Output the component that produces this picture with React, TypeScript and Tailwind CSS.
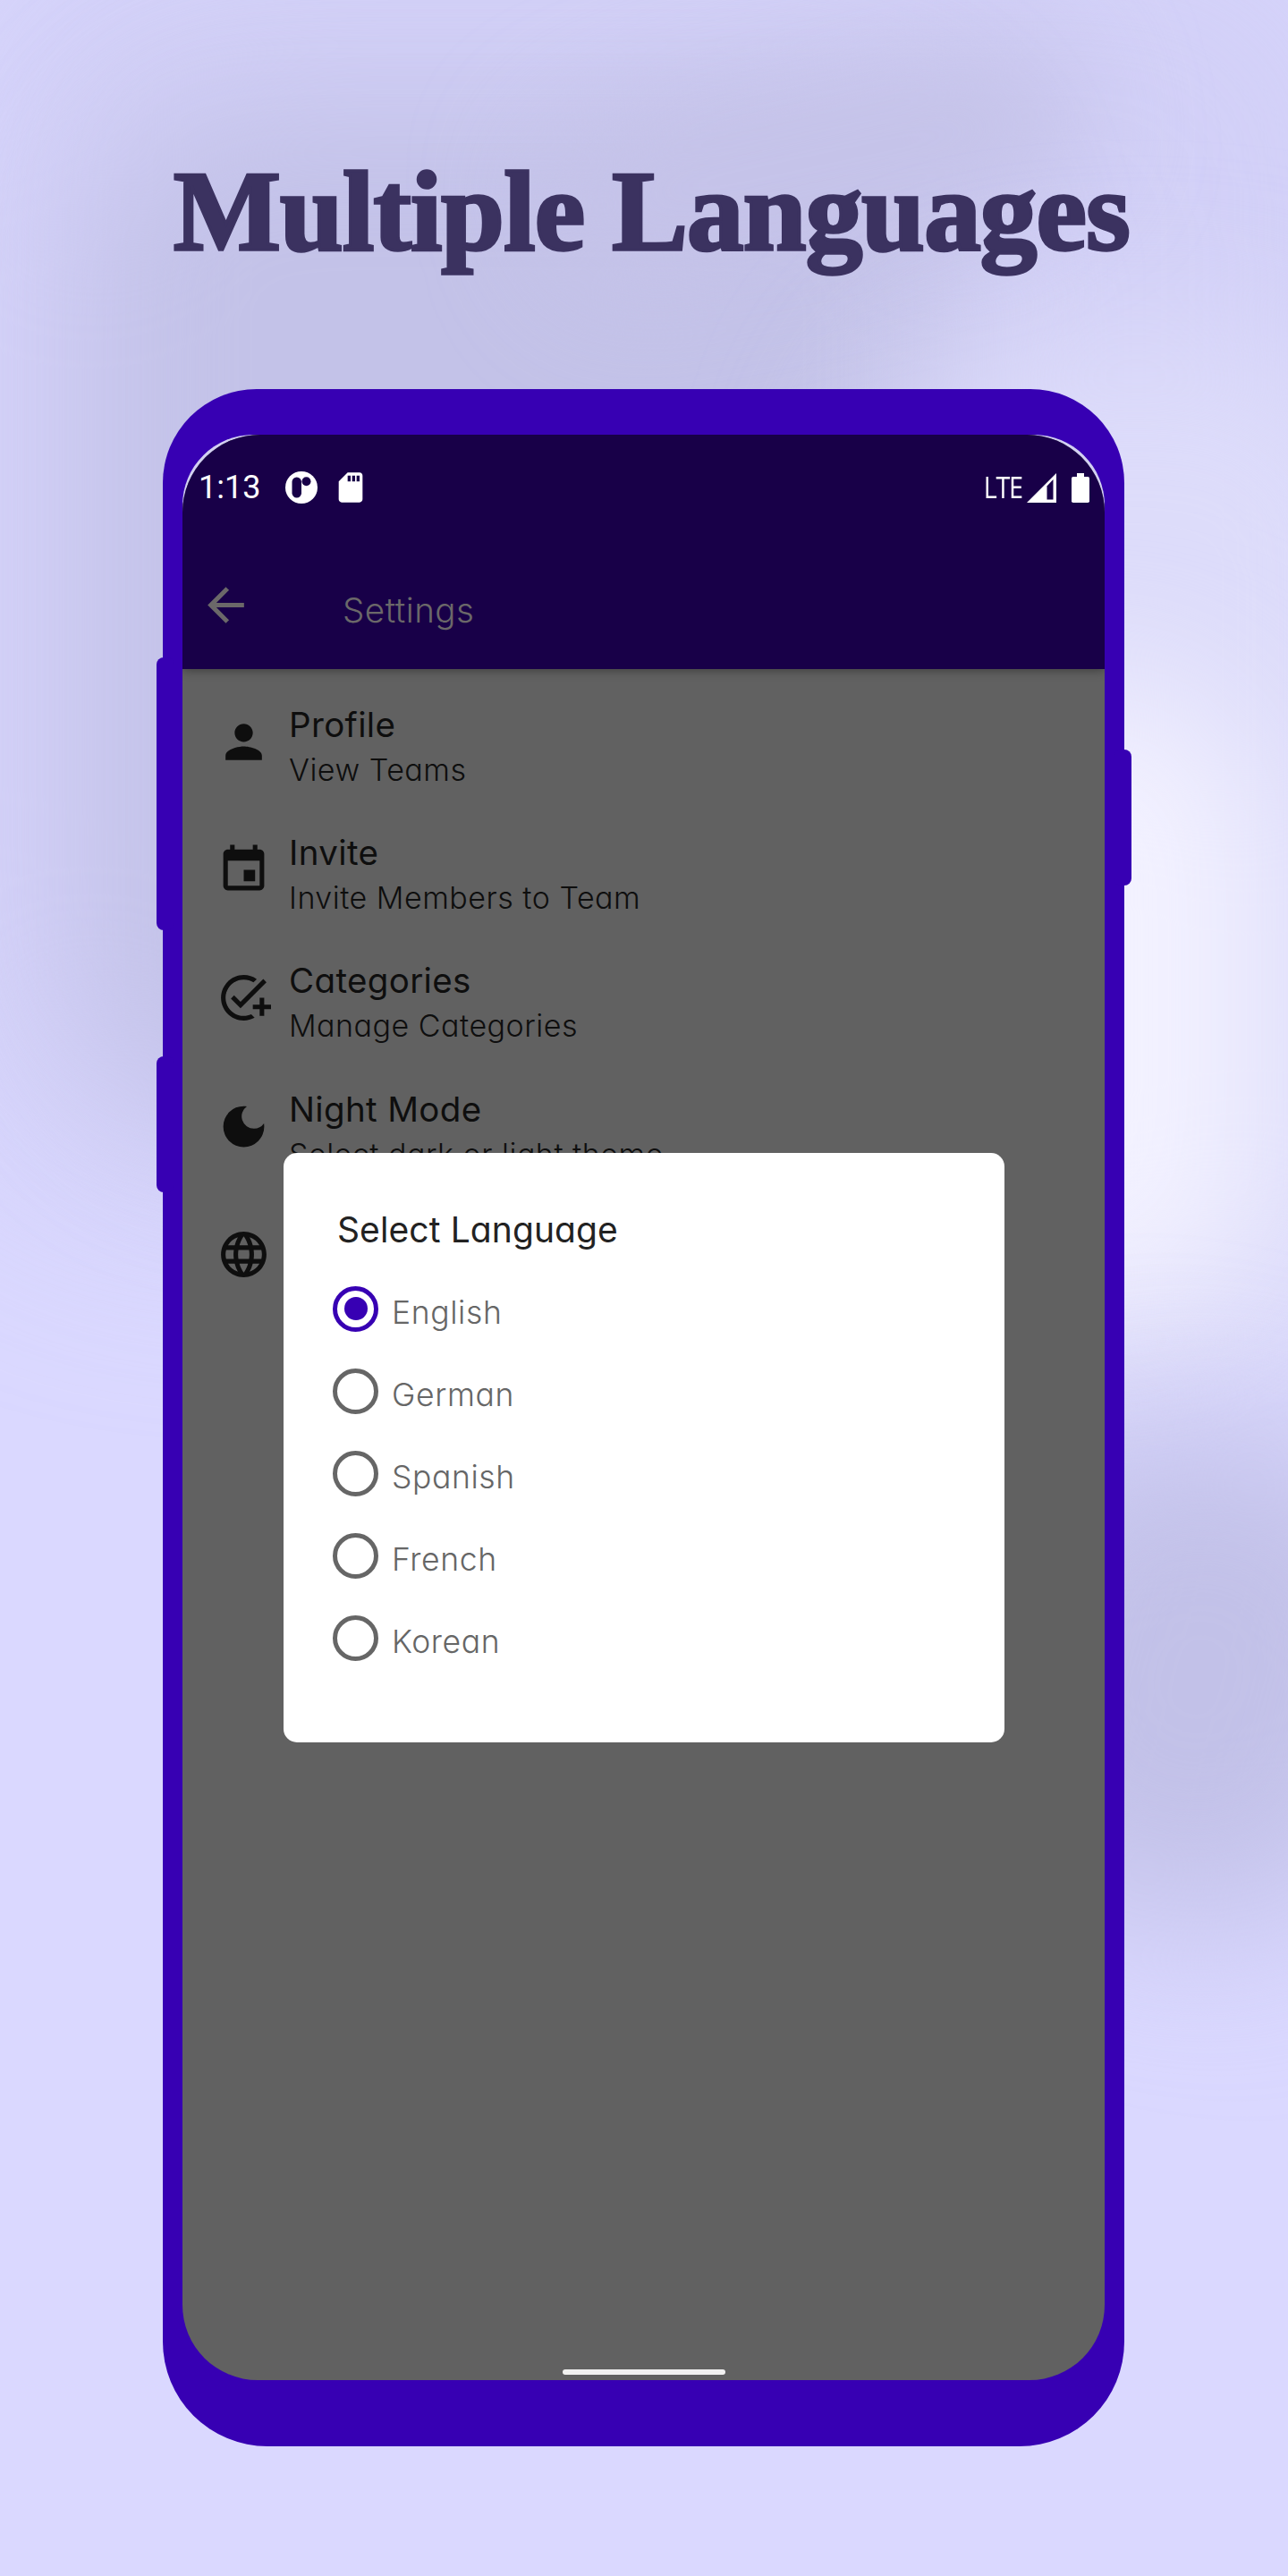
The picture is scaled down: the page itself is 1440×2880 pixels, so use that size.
import type { ReactNode } from "react";
import {
  MdArrowBack,
  MdPerson,
  MdAddTask,
  MdDarkMode,
  MdLanguage,
  MdSdCard,
} from "react-icons/md";

function EventIcon() {
  return (
    <svg viewBox="0 0 24 24" className="size-[61px]" fill="currentColor">
      <path d="M17 12h-5v5h5v-5zM16 1v2H8V1H6v2H5c-1.11 0-1.99.9-1.99 2L3 19c0 1.1.89 2 2 2h14c1.1 0 2-.9 2-2V5c0-1.1-.9-2-2-2h-1V1h-2zm3 18H5V8h14v11z" />
    </svg>
  );
}

const settings: { title: string; subtitle: string; icon: ReactNode }[] = [
  { title: "Profile", subtitle: "View Teams", icon: <MdPerson className="size-[61px]" /> },
  { title: "Invite", subtitle: "Invite Members to Team", icon: <EventIcon /> },
  { title: "Categories", subtitle: "Manage Categories", icon: <MdAddTask className="size-[61px]" /> },
  { title: "Night Mode", subtitle: "Select dark or light theme", icon: <MdDarkMode className="size-[61px]" /> },
  { title: "", subtitle: "", icon: <MdLanguage className="size-[61px]" /> },
];

const languages = ["English", "German", "Spanish", "French", "Korean"];

function Backdrop() {
  return (
    <div className="absolute inset-0 overflow-hidden bg-[#dad8ff]">
      <div className="absolute -left-[100px] -top-[150px] h-[1500px] w-[1700px] rounded-[300px] bg-[#cfcdf4] opacity-70 blur-[120px]" />
      <div className="absolute left-[90px] top-[110px] h-[1160px] w-[1000px] rounded-[200px] bg-[#c3c2e8] blur-[80px]" />
      <div className="absolute left-[600px] top-[80px] h-[200px] w-[620px] -rotate-12 rounded-full bg-[#c5c3e9] blur-[65px]" />
      <div className="absolute left-[960px] top-[370px] h-[1180px] w-[620px] rounded-[220px] bg-[#dddcfa] blur-[90px]" />
      <div className="absolute left-[1060px] top-[760px] h-[720px] w-[350px] rounded-[170px] bg-[#f3f2ff] blur-[85px]" />
      <div className="absolute left-[1100px] top-[1600px] h-[550px] w-[480px] rotate-[15deg] rounded-[200px] bg-[#c2c1e8] blur-[90px]" />
    </div>
  );
}

function StatusBar() {
  return (
    <div className="flex h-[118px] items-center pl-[18px] pr-[17px] text-white">
      <span className="w-[97px] font-[Roboto,sans-serif] text-[36px] leading-none">1:13</span>
      <svg viewBox="0 0 36 36" className="size-9">
        <circle cx="18" cy="18" r="18" fill="#fff" />
        <rect x="7.5" y="6.5" width="10.5" height="23" rx="5.25" fill="#180048" />
        <circle cx="23.5" cy="11.3" r="5" fill="#180048" />
      </svg>
      <MdSdCard className="ml-[17px] size-[40px]" />
      <span className="ml-auto origin-right scale-x-[0.9] font-['Open_Sans',sans-serif] text-[32px] leading-none tracking-[-1.5px]">
        LTE
      </span>
      <svg viewBox="0 0 33 33" className="ml-[5px] size-[33px]">
        <path d="M33 0V33H0Z" fill="#fff" />
        <path d="M22.5 14.5L29.5 7V29.5H22.5Z" fill="#180048" />
      </svg>
      <svg viewBox="0 0 20 33" className="ml-[17px] h-[33px] w-[20px]" fill="#fff">
        <rect x="6" width="8" height="6" />
        <rect y="4" width="20" height="29" rx="1.8" />
      </svg>
    </div>
  );
}

function SettingsScreen() {
  return (
    <div className="flex h-full flex-col overflow-hidden rounded-b-[84px] rounded-t-[87px] bg-[#616161]">
      <header className="h-[262px] shrink-0 bg-[#180048] shadow-[0_2px_10px_rgba(0,0,0,0.35)]">
        <StatusBar />
        <div className="flex h-[144px] items-center pl-[18px] text-[#6b6869]">
          <MdArrowBack className="size-[61px]" />
          <h2 className="pl-[100px] pt-[11px] text-[38.5px] font-light leading-[50px] tracking-[0.5px]">Settings</h2>
        </div>
      </header>
      <ul className="pt-[10px] text-[#0e0e0e]">
        {settings.map((item, i) => (
          <li key={i} className="flex h-[143.2px] pl-[38px]">
            <span className="flex items-center">{item.icon}</span>
            <div className="pl-[20px] pt-[26px]">
              <h3 className="text-[38.5px] font-normal leading-[52px] tracking-[0.35px]">{item.title}</h3>
              <p className="pt-[3px] text-[34px] font-light leading-[44px] tracking-[0.5px]">{item.subtitle}</p>
            </div>
          </li>
        ))}
      </ul>
      <div className="mb-[6px] mt-auto h-[6px] w-[182px] self-center rounded-full bg-[#f1f1f1]" />
    </div>
  );
}

function LanguageDialog() {
  return (
    <div
      role="dialog"
      className="absolute left-[113px] top-[803px] h-[659px] w-[806px] rounded-[15px] bg-white pl-[55px] pt-[60px]"
    >
      <h2 className="pl-[5px] text-[39px] font-normal leading-[52px] tracking-[0.1px] text-[#222]">Select Language</h2>
      <div className="pt-4">
        {languages.map((name, i) => (
          <label
            key={name}
            className={`flex h-[92px] items-center ${i === 0 ? "text-[#3700b3]" : "text-[#666]"}`}
          >
            <span className="flex size-[51px] items-center justify-center rounded-full border-[5.5px] border-current">
              {i === 0 && <span className="size-[26px] rounded-full bg-current" />}
            </span>
            <span className="pl-[15px] pt-[9px] text-[35.5px] font-light leading-[48px] tracking-[0.6px] text-[#666]">
              {name}
            </span>
          </label>
        ))}
      </div>
    </div>
  );
}

export default function App() {
  return (
    <main className="relative h-[2880px] w-[1440px] overflow-hidden font-[Inter,sans-serif] [font-feature-settings:'cv11']">
      <Backdrop />
      <div className="relative">
        <h1 className="h-[435px] whitespace-nowrap pl-[194px] pt-[166px] font-['Liberation_Serif',serif] text-[127px] font-bold leading-[140px] tracking-[-0.8px] text-[#3b3260] [-webkit-text-stroke:3.5px_#3b3260]">
          Multiple Languages
        </h1>
        <div className="relative ml-[182px] h-[2300px] w-[1075px] rounded-b-[117px] rounded-t-[105px] bg-[#3700b3] pl-[22px] pt-[51px]">
          <span className="absolute -left-[7px] top-[300px] h-[305px] w-[20px] rounded-[8px] bg-[#3700b3]" />
          <span className="absolute -left-[7px] top-[746px] h-[152px] w-[20px] rounded-[8px] bg-[#3700b3]" />
          <span className="absolute -right-[8px] top-[403px] h-[152px] w-[20px] rounded-[8px] bg-[#3700b3]" />
          <div className="relative h-[2175px] w-[1031px] rounded-b-[84px] rounded-t-[79px] bg-linear-to-b from-[#d2d0f2] from-50% to-[#3700b3] to-50%">
            <SettingsScreen />
            <LanguageDialog />
          </div>
        </div>
      </div>
    </main>
  );
}
